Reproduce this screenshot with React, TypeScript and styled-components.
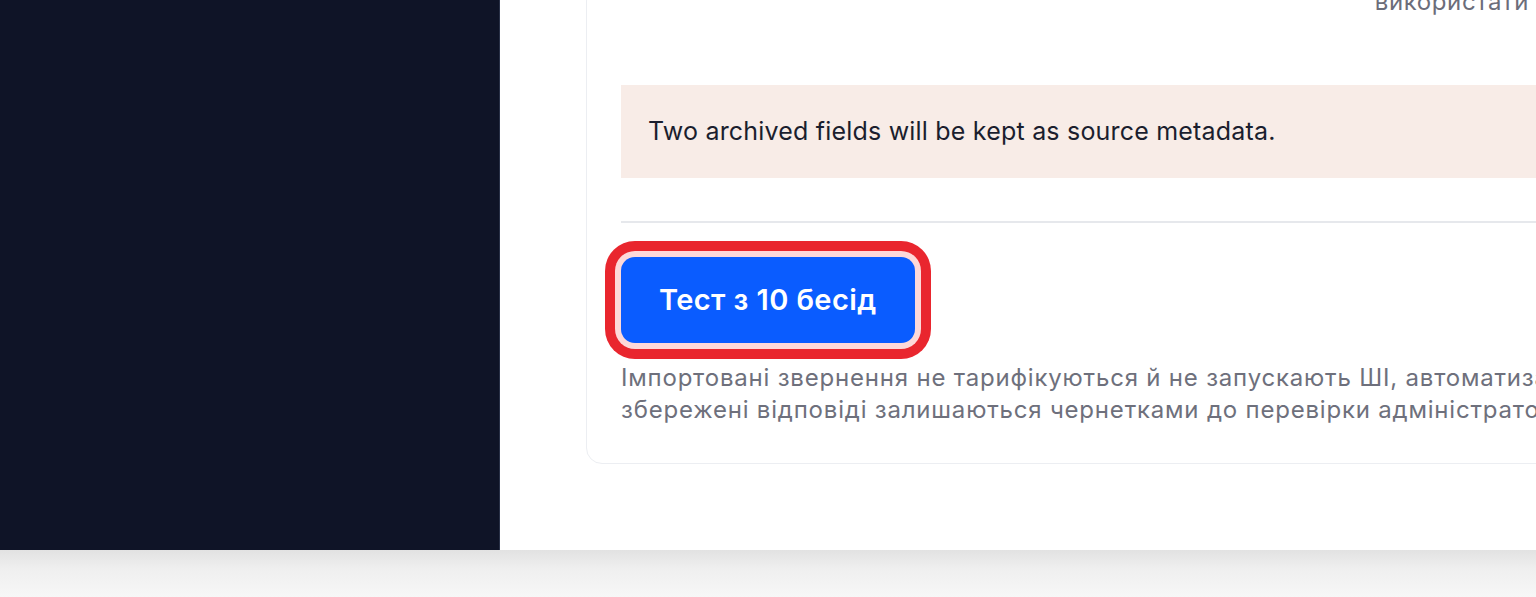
import { FC } from "react";
import styled, { createGlobalStyle } from "styled-components";

const GlobalStyle = createGlobalStyle`
  html, body {
    margin: 0;
    padding: 0;
    background: #f7f7f7;
    font-family: Inter, "Noto Sans", "Liberation Sans", sans-serif;
    -webkit-font-smoothing: antialiased;
  }
`;

const Frame = styled.div`
  display: grid;
  grid-template-columns: 500px 1fr;
  height: 550px;
  overflow: hidden;
  background: #ffffff;
`;

const ShadowBand = styled.div`
  height: 47px;
  background: linear-gradient(to bottom, #e2e2e2 0%, #efefef 40%, #f7f7f7 100%);
`;

const Sidebar = styled.aside`
  background: #0f1427;
  border-right: 1px solid #283046;
`;

const Main = styled.main`
  display: flex;
  flex-direction: column;
  justify-content: flex-end;
  overflow: hidden;
  padding: 0 0 86px 86px;
`;

const Card = styled.section`
  width: 1100px;
  flex-shrink: 0;
  box-sizing: border-box;
  border: 1px solid #eceef2;
  border-radius: 16px;
  padding: 0 34px 37px 34px;
`;

const TopRow = styled.div`
  display: flex;
  justify-content: flex-end;
  padding-right: 122px;
  font-size: 24px;
  line-height: 32px;
  letter-spacing: 0.6px;
  color: #6b6d7a;
`;

const Notice = styled.div`
  margin-top: 67px;
  background: #f8ece7;
  padding: 30px 27px 31px;
  font-size: 25px;
  line-height: 32px;
  letter-spacing: 0.2px;
  color: #1b1e2e;
`;

const Divider = styled.hr`
  margin: 43px 0 0;
  border: none;
  height: 2px;
  background: #e6e8ec;
`;

const Actions = styled.div`
  display: flex;
  padding: 34px 0 0;
`;

const PrimaryButton = styled.button<{ $focused?: boolean }>`
  font-family: inherit;
  font-size: 29px;
  font-weight: 600;
  line-height: 32px;
  letter-spacing: 0.4px;
  color: #ffffff;
  background: #0a5cff;
  border: none;
  border-radius: 14px;
  padding: 27px 38px;
  cursor: pointer;
  box-shadow: ${({ $focused }) =>
    $focused ? "0 0 0 6px #fdd9d9, 0 0 0 16px #e9262e" : "none"};
`;

const Hint = styled.p`
  margin: 19px 0 0;
  font-size: 24px;
  line-height: 32px;
  letter-spacing: 0.8px;
  color: #6e707c;
  white-space: nowrap;
`;

const App: FC = () => (
  <>
    <GlobalStyle />
    <Frame>
      <Sidebar />
      <Main>
        <Card>
          <TopRow>використати</TopRow>
          <Notice>Two archived fields will be kept as source metadata.</Notice>
          <Divider />
          <Actions>
            <PrimaryButton $focused>Тест з 10 бесід</PrimaryButton>
          </Actions>
          <Hint>
            Імпортовані звернення не тарифікуються й не запускають ШІ, автоматизації чи вебхуки;
            <br />
            збережені відповіді залишаються чернетками до перевірки адміністратором.
          </Hint>
        </Card>
      </Main>
    </Frame>
    <ShadowBand />
  </>
);

export default App;
